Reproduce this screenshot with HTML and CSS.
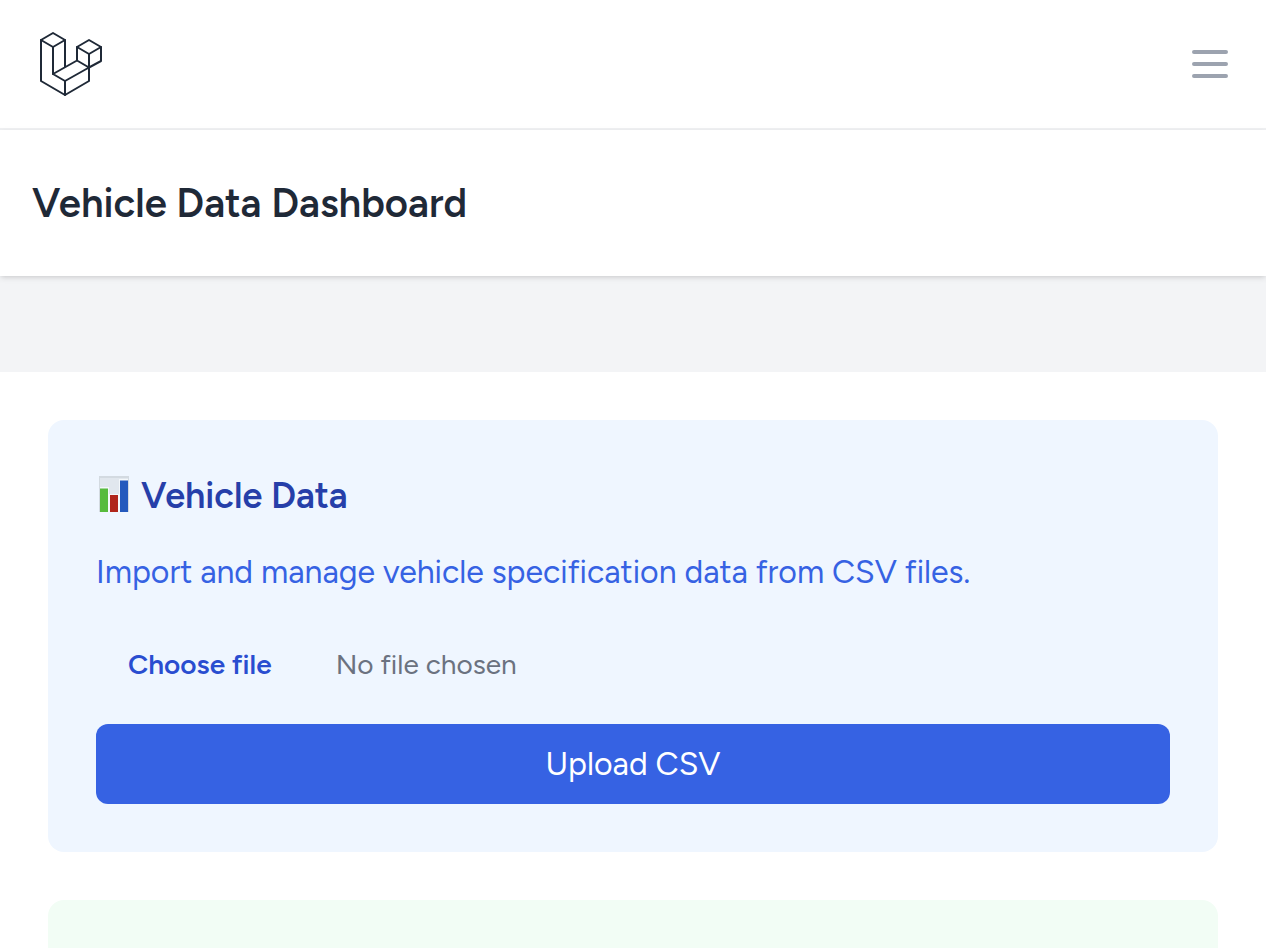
FILE: index.html
```html
<!DOCTYPE html>
<html lang="en">
<head>
<meta charset="utf-8">
<meta name="viewport" content="width=device-width, initial-scale=1">
<title>Vehicle Data Dashboard</title>
<link rel="stylesheet" href="styles.css">
</head>
<body>
<nav class="nav">
  <a class="logo" href="#" aria-label="Home">
    <svg width="64" height="64" viewBox="0 0 64 64" fill="none" stroke="currentColor" stroke-width="2" stroke-linejoin="round" stroke-linecap="round" aria-hidden="true">
      <path d="M2 8 14 1 26 8V35M2 8V49L26 63 50 49V35.500L62 29V15L50 8 38 15V28.500L50 35.500 26 49 14 42 38 28.500"/>
      <path d="M2 8 14 15 26 8M14 15V42M26 49V63M38 15 50 22 62 15M50 22V35.500"/>
    </svg>
  </a>
  <button class="menu" type="button" aria-label="Open menu">
    <svg width="48" height="48" viewBox="0 0 24 24" fill="none" stroke="currentColor" stroke-width="2" stroke-linecap="round" aria-hidden="true">
      <path d="M4 6h16M4 12h16M4 18h16"/>
    </svg>
  </button>
</nav>
<header class="header">
  <h1 class="title">Vehicle Data Dashboard</h1>
</header>
<main class="main">
  <div class="panel">
    <section class="card card-blue">
      <h2 class="card-title">
        <svg class="chart" width="36" height="40" viewBox="0 0 36 40" aria-hidden="true">
          <path fill="#d3dae1" d="M3 0h30v36H3z"/>
          <path fill="#e1e7ee" d="M4 2h28v34H4z"/>
          <path fill="#f4f8fb" d="M4 11h9v25H4zM13 18h10v18H13zM23 3h9v33h-9z"/>
          <path fill="#57bb3d" d="M4 12.500h8V36H4z"/>
          <path fill="#b0251b" d="M14 19h8v17h-8z"/>
          <path fill="#2459bd" d="M24 4.500h8V36h-8z"/>
        </svg>
        <span>Vehicle Data</span>
      </h2>
      <p class="description">Import and manage vehicle specification data from CSV files.</p>
      <form class="form">
        <label class="file" for="csv">
          <input class="file-input" id="csv" type="file" accept=".csv">
          <span class="file-button">Choose file</span>
          <span class="file-name">No file chosen</span>
        </label>
        <button class="upload" type="submit">Upload CSV</button>
      </form>
    </section>
    <section class="card-green"></section>
  </div>
</main>
</body>
</html>
```
FILE: styles.css
```css
* { box-sizing: border-box; }

body {
  margin: 0;
  min-height: 100vh;
  display: flex;
  flex-direction: column;
  background: #f3f4f6;
  color: #1f2937;
  font-family: Figtree, Lato, sans-serif;
}

h1, h2, p { margin: 0; }

.nav {
  display: flex;
  align-items: center;
  justify-content: space-between;
  padding: 32px 32px 32px 39px;
  background: #fff;
  border-bottom: 2px solid #f0f1f3;
}

.logo { display: flex; color: #1f2937; }

.menu {
  display: flex;
  padding: 0;
  border: 0;
  background: none;
  color: #9ca3af;
}

.header {
  padding: 48px 32px;
  background: #fff;
  box-shadow: 0 2px 6px rgba(0, 0, 0, 0.1), 0 2px 4px -2px rgba(0, 0, 0, 0.1);
}

.title {
  font-size: 40px;
  line-height: 50px;
  font-weight: 600;
}

.main {
  flex: 1;
  display: flex;
  padding-top: 96px;
}

.panel {
  flex: 1;
  display: flex;
  flex-direction: column;
  gap: 48px;
  padding: 48px 48px 0;
  background: #fff;
}

.card {
  padding: 48px;
  border-radius: 16px;
}

.card-blue { background: #eff6ff; }

.card-green {
  flex: 1;
  min-height: 48px;
  border-radius: 16px 16px 0 0;
  background: #f2fdf5;
}

.card-title {
  display: flex;
  align-items: center;
  gap: 9px;
  margin-bottom: 24px;
  font-size: 36px;
  line-height: 56px;
  font-weight: 600;
  color: #263fa9;
}

.description {
  margin-bottom: 32px;
  font-size: 32px;
  line-height: 48px;
  color: #3662e3;
}

.form {
  display: flex;
  flex-direction: column;
  gap: 24px;
}

.file {
  position: relative;
  display: flex;
  align-items: center;
  gap: 32px;
  font-size: 28px;
  line-height: 40px;
  color: #6b7280;
}

.file-input {
  position: absolute;
  inset: 0;
  width: 100%;
  opacity: 0;
}

.file-button {
  padding: 16px 32px;
  font-weight: 600;
  color: #294dd0;
}

.upload {
  padding: 16px 32px;
  border: 0;
  border-radius: 12px;
  background: #3662e3;
  color: #fff;
  font-family: inherit;
  font-size: 32px;
  line-height: 48px;
}
```
